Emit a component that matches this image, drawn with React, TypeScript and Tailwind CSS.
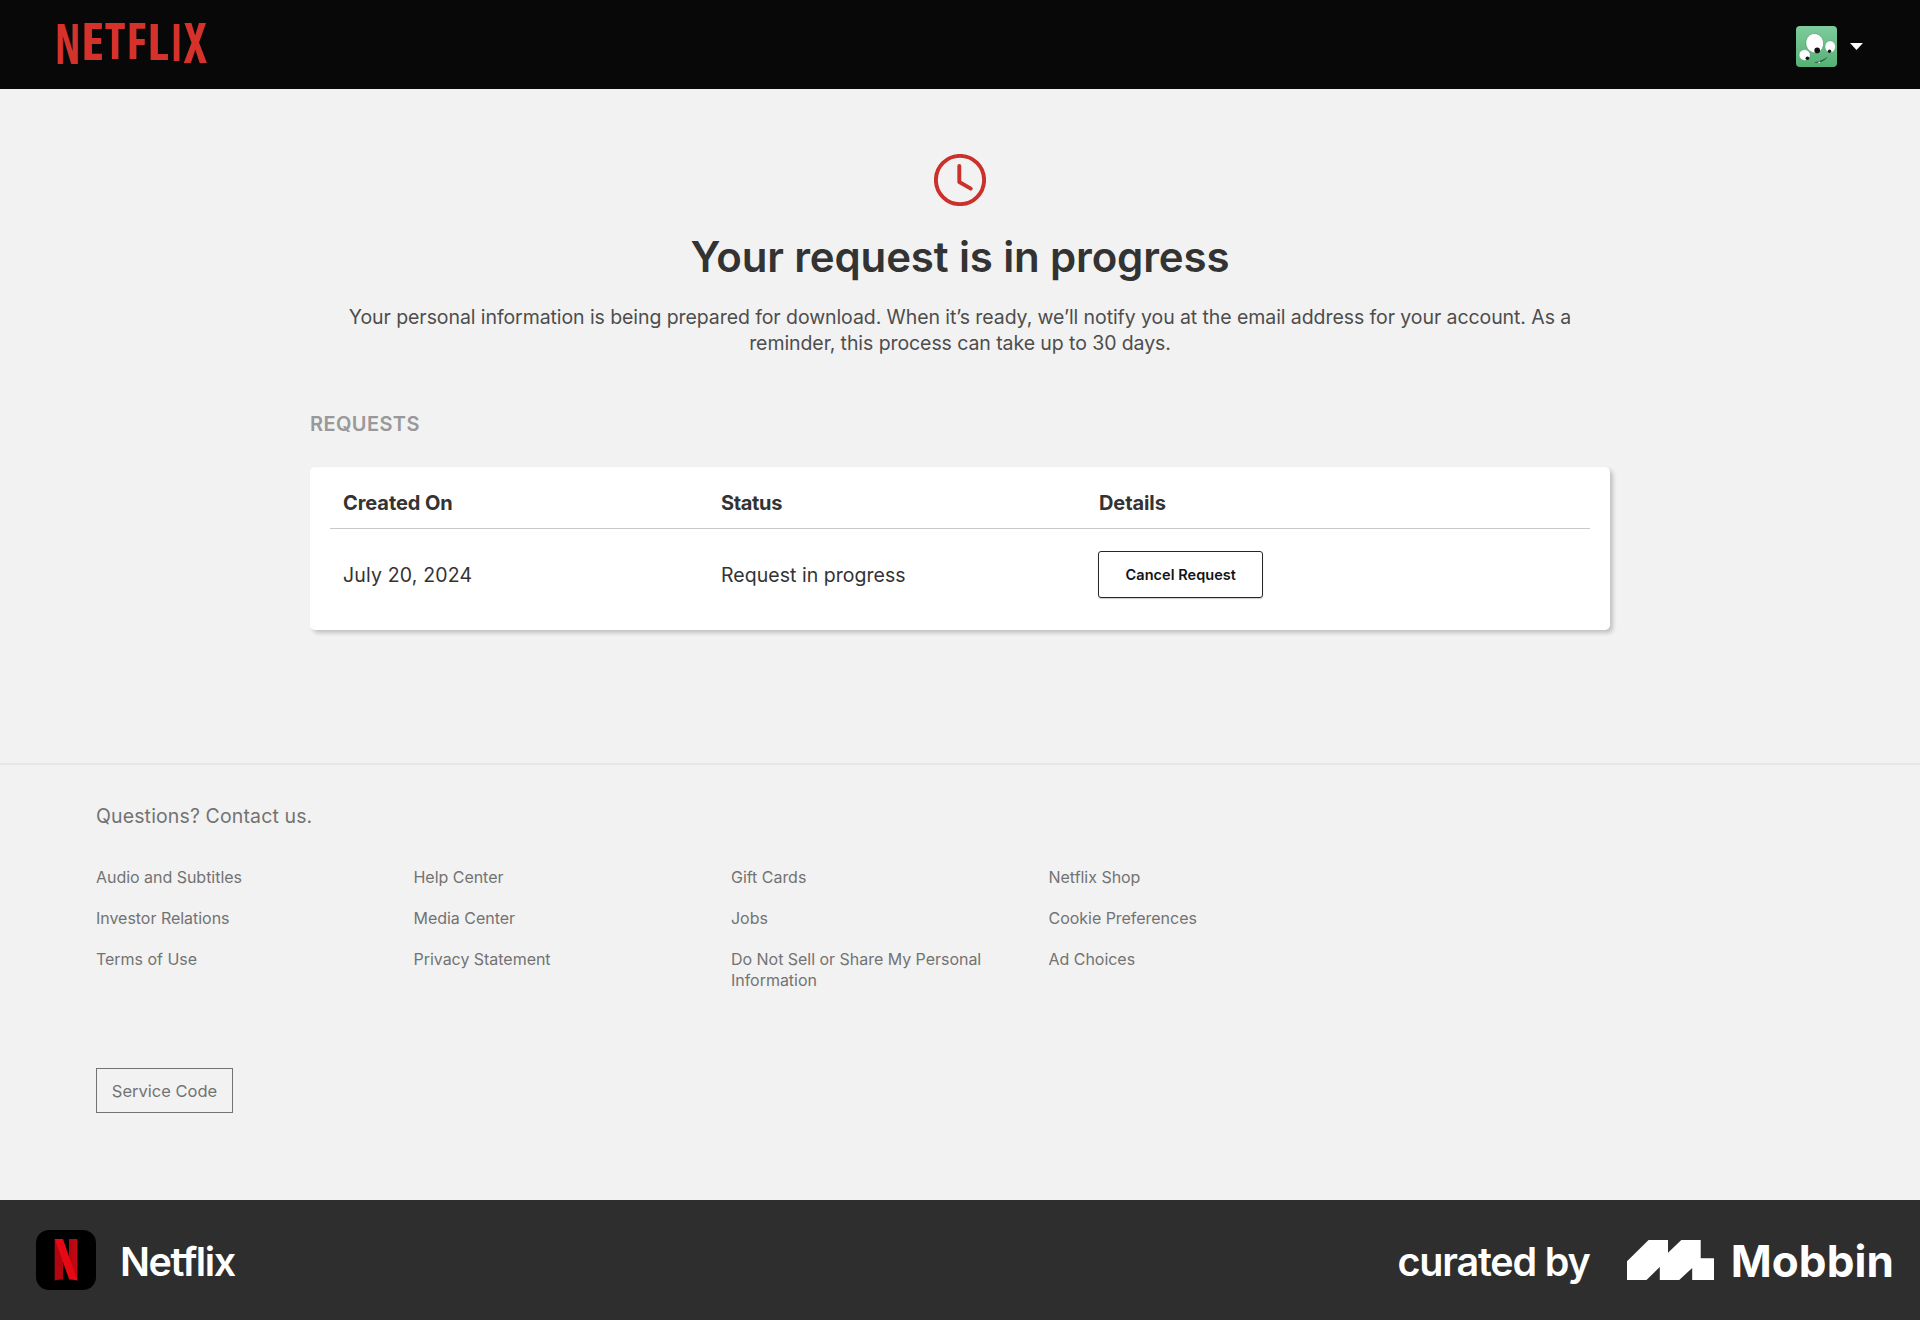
const wordmark = [
  { ch: "N", x: 14.5, size: 56, length: 25.2 },
  { ch: "E", x: 39.7, size: 51.4, length: 23.2 },
  { ch: "T", x: 62.1, size: 49.8, length: 20.8 },
  { ch: "F", x: 83.6, size: 49.2, length: 20.4 },
  { ch: "L", x: 104.9, size: 50.4, length: 21.5 },
  { ch: "I", x: 123.3, size: 52.2, length: 10.8 },
  { ch: "X", x: 142.3, size: 55.2, length: 23.2 },
];

const footerLinks = [
  ["Audio and Subtitles", "Help Center", "Gift Cards", "Netflix Shop"],
  ["Investor Relations", "Media Center", "Jobs", "Cookie Preferences"],
  ["Terms of Use", "Privacy Statement", "Do Not Sell or Share My Personal Information", "Ad Choices"],
];

function Wordmark() {
  return (
    <svg width="160" height="88" viewBox="0 0 160 88" className="ml-[53px]" role="img" aria-label="Netflix">
      {wordmark.map((l) => (
        <text
          key={l.ch}
          x={l.x}
          y={23.8 + l.size * 0.714}
          fontSize={l.size}
          textLength={l.length}
          lengthAdjust="spacingAndGlyphs"
          textAnchor="middle"
          className="fill-[#d5322b] font-['Open_Sans'] font-bold [font-stretch:75%]"
        >
          {l.ch}
        </text>
      ))}
    </svg>
  );
}

function Avatar() {
  return (
    <svg width="41" height="41" viewBox="0 0 41 41">
      <defs>
        <linearGradient id="skin" x1="0" y1="0" x2="0" y2="1">
          <stop offset="0" stopColor="#7fcb9c" />
          <stop offset="1" stopColor="#55b176" />
        </linearGradient>
      </defs>
      <rect width="41" height="41" rx="4" fill="url(#skin)" />
      <ellipse cx="18.7" cy="17.2" rx="8.9" ry="9.8" transform="rotate(-12 18.7 17.2)" fill="#fff" stroke="#4b9a69" strokeWidth="0.6" />
      <ellipse cx="34.2" cy="20.8" rx="5.3" ry="6.1" fill="#fff" stroke="#4b9a69" strokeWidth="0.5" />
      <ellipse cx="8.6" cy="29" rx="5.6" ry="5.4" fill="#fff" stroke="#4b9a69" strokeWidth="0.5" />
      <circle cx="21.2" cy="24.4" r="2.8" fill="#111" />
      <circle cx="33.5" cy="25.3" r="1.7" fill="#111" />
      <circle cx="11.4" cy="32.2" r="1.8" fill="#111" />
      <path d="M18.8 36.6C23.5 36.8 28 35 31.2 31.3C28.3 33.6 23.5 35.8 18.8 36.6Z" fill="#173d26" stroke="#173d26" strokeWidth="0.3" />
      <path d="M21.8 36.1L24.2 35.6L23.4 37.3Z" fill="#fff" />
    </svg>
  );
}

function Header() {
  return (
    <header className="flex h-[88.5px] items-start justify-between bg-[#080808]">
      <Wordmark />
      <div className="mr-[57px] mt-[26px] flex items-center gap-[13.5px]">
        <Avatar />
        <svg width="13" height="7" viewBox="0 0 13 7">
          <path d="M0 0H13L6.5 7Z" fill="#fff" />
        </svg>
      </div>
    </header>
  );
}

function RequestsCard() {
  return (
    <div className="mt-[30.5px] h-[163.5px] rounded-[5px] bg-white px-5 pt-[26px] text-[#333] shadow-[3px_3px_4px_rgba(0,0,0,0.2)]">
      <div className="grid h-[36px] grid-cols-[30%_30%_40%] border-b border-[#c8c8c8] text-[20px] leading-[21px] font-bold">
        <div className="pl-[13px] tracking-[-0.07px]">Created On</div>
        <div className="pl-[13px] tracking-[-0.35px]">Status</div>
        <div className="pl-[13px] tracking-[-0.1px]">Details</div>
      </div>
      <div className="mt-[22.5px] grid grid-cols-[30%_30%_40%] items-center text-[19.5px]">
        <div className="pl-[13px] pt-[2px] tracking-[0.17px]">July 20, 2024</div>
        <div className="pl-[13px] pt-[2px] tracking-[0.04px]">Request in progress</div>
        <div className="pl-[12.3px]">
          <button className="block h-[47px] w-[165px] rounded-[3px] border-[1.5px] border-[#262626] text-[14.5px] leading-[45px] font-semibold tracking-[0.05px] text-[#141414] shadow-[0_1px_1px_rgba(0,0,0,0.2)]">
            Cancel Request
          </button>
        </div>
      </div>
    </div>
  );
}

function Footer() {
  return (
    <footer className="mt-[132.5px] border-t-2 border-[#e6e6e6] px-24 pt-[38px] text-[#737373]">
      <p className="text-[19.5px] leading-[26px] tracking-[0.13px]">Questions? Contact us.</p>
      <div className="mt-[38px] grid w-[1270px] grid-cols-4 gap-y-[20.5px] text-[16px] leading-[20.8px]">
        {footerLinks.flat().map((label) => (
          <a key={label} className="pr-12 tracking-[-0.03px]">{label}</a>
        ))}
      </div>
      <button className="mt-[77.5px] block h-[45px] w-[137px] border border-[#737373] pt-[2px] text-[16.5px]">Service Code</button>
    </footer>
  );
}

function CreditBar() {
  return (
    <div className="flex h-[120px] items-center bg-[#2e2e2e] pl-9 pr-[28px] text-white">
      <svg width="60" height="60" viewBox="0 0 60 60">
        <defs>
          <linearGradient id="fold" x1="0" y1="0" x2="1" y2="0">
            <stop offset="0" stopColor="#b1060f" />
            <stop offset="1" stopColor="#c20a14" />
          </linearGradient>
        </defs>
        <rect width="60" height="60" rx="13" fill="#000" />
        <path d="M18.7 9H27V49.6Q22.8 49.8 18.7 50.4Z" fill="#b1060f" />
        <path d="M33 9H41.4V50.4L33 48Z" fill="url(#fold)" />
        <path d="M18.7 9L27 31V26L33 44V32Z" fill="#8c050c" />
        <path d="M18.7 9H27L41.5 50.6Q37 49.8 33.2 49.6Z" fill="#e50914" />
      </svg>
      <span className="ml-[24px] pt-[4px] text-[39.5px] leading-[48px] font-semibold tracking-[-1.4px]">Netflix</span>
      <span className="ml-auto mr-[37px] pt-[4px] text-[39.5px] leading-[48px] font-semibold tracking-[-1.17px]">curated by</span>
      <svg width="87" height="40" viewBox="0 0 87 40" className="mr-[17px]">
        <path
          d="M21.6 0H41V12.8L54.3 0H73.7V18.3H87V40H65.2V28L52.2 40H32.8V27L19.5 40H0V21.3Z"
          fill="#fff"
        />
      </svg>
      <span className="-mr-[2px] pt-px text-[44px] leading-[48px] font-bold tracking-[0.1px]">Mobbin</span>
    </div>
  );
}

export default function App() {
  return (
    <div className="flex h-[1320px] w-[1920px] flex-col overflow-hidden bg-[#f2f2f2] font-['Inter','Liberation_Sans',sans-serif]">
      <Header />
      <main className="mx-auto w-[1300px]">
        <div className="flex flex-col items-center pt-[65.5px] text-center">
          <svg width="52" height="52" viewBox="0 0 52 52" fill="none" stroke="#cb302b" strokeWidth="3.9">
            <circle cx="26" cy="26" r="24.1" />
            <path d="M25.3 12V28L36.8 34.6" strokeLinecap="round" strokeLinejoin="round" />
          </svg>
          <h1 className="mt-[25.5px] text-[42px] leading-[50px] font-semibold tracking-[-0.14px] text-[#333]">
            Your request is in progress
          </h1>
          <p className="mt-[23.5px] text-[19.5px] leading-[25.5px] tracking-[-0.08px] text-[#4d4d4d]">
            Your personal information is being prepared for download. When it’s ready, we’ll notify you at the email
            address for your account. As a reminder, this process can take up to 30 days.
          </p>
        </div>
        <h2 className="mt-[56px] text-[20px] leading-[24px] font-semibold tracking-[0.4px] text-[#999]">REQUESTS</h2>
        <RequestsCard />
      </main>
      <Footer />
      <div className="mt-auto">
        <CreditBar />
      </div>
    </div>
  );
}
